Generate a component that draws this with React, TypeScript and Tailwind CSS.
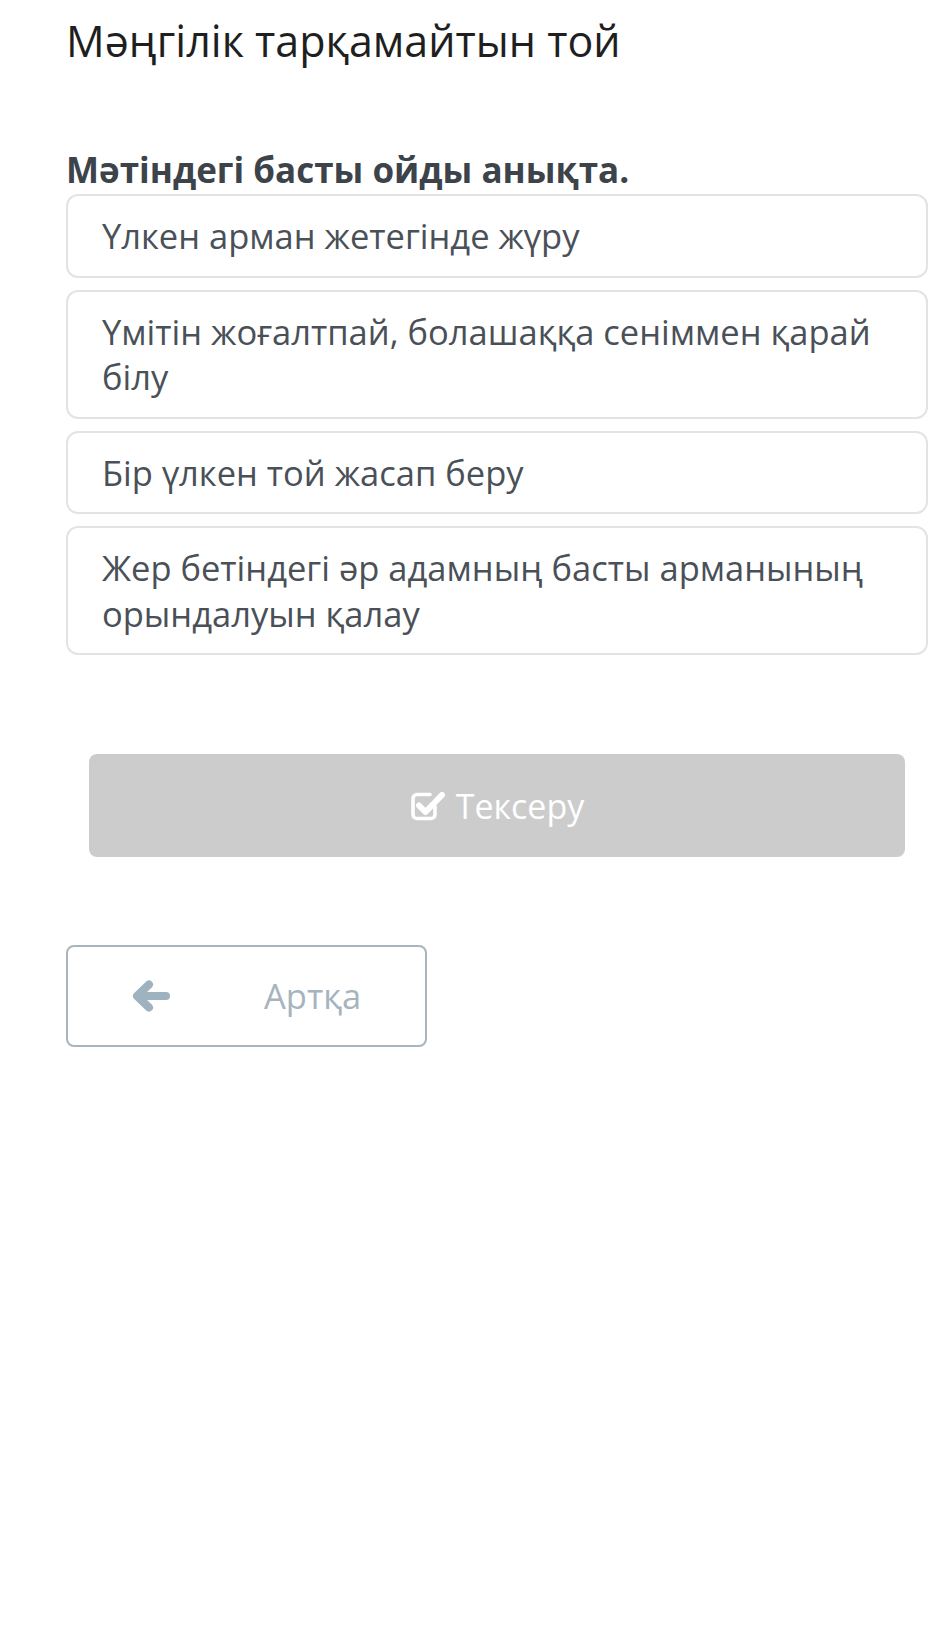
import React from "react";

const options = [
  "Үлкен арман жетегінде жүру",
  "Үмітін жоғалтпай, болашаққа сеніммен қарай білу",
  "Бір үлкен той жасап беру",
  "Жер бетіндегі әр адамның басты арманының орындалуын қалау",
];

function CheckSquare() {
  return (
    <svg width="36" height="34" viewBox="0 0 36 34" fill="none">
      <path
        d="M25 17.5 V25.5 a4 4 0 0 1 -4 4 H7 a4 4 0 0 1 -4 -4 V9.5 a4 4 0 0 1 4 -4 H20"
        stroke="white"
        strokeWidth="3.6"
        strokeLinecap="round"
        strokeLinejoin="round"
      />
      <path
        d="M9 16.5 L15.5 23 L32 6"
        stroke="white"
        strokeWidth="6"
        strokeLinecap="round"
        strokeLinejoin="round"
      />
    </svg>
  );
}

function ArrowLeft() {
  return (
    <svg width="38" height="32" viewBox="0 0 38 32" fill="none">
      <path
        d="M34 16 H6 M17 4.5 L5 16 L17 27.5"
        stroke="#9fb2bf"
        strokeWidth="8"
        strokeLinecap="round"
        strokeLinejoin="round"
      />
    </svg>
  );
}

export default function App() {
  return (
    <div
      className="min-h-[1632px] w-[945px] bg-white pl-[66px] pr-[17px] pt-[14px]"
      style={{ fontFamily: '"Open Sans", "Noto Sans", sans-serif' }}
    >
      <h1 className="text-[43px] leading-[54px] text-[#1f1f1f] font-normal">
        Мәңгілік тарқамайтын той
      </h1>
      <h2 className="mt-[79px] text-[35px] leading-[46px] font-bold text-[#3d434a]">
        Мәтіндегі басты ойды анықта.
      </h2>
      <div className="mt-[1px] flex flex-col gap-[12px]">
        {options.map((o) => (
          <div
            key={o}
            className="rounded-[12px] border-2 border-[#e3e3e3] pl-[34px] pr-[30px] py-[17px] text-[34.5px] leading-[45.5px] text-[#4a5057]"
          >
            {o}
          </div>
        ))}
      </div>
      <div className="mx-[23px] mt-[99px] flex h-[103px] items-center justify-center gap-[10px] rounded-[8px] bg-[#cccccc] text-white">
        <CheckSquare />
        <span className="text-[34px] leading-none">Тексеру</span>
      </div>
      <div className="mt-[88px] flex h-[102px] w-[361px] items-center rounded-[8px] border-2 border-[#a9b5bd] pl-[64px] text-[#a6b4be]">
        <ArrowLeft />
        <span className="ml-[94px] text-[34.5px] leading-none">Артқа</span>
      </div>
    </div>
  );
}
